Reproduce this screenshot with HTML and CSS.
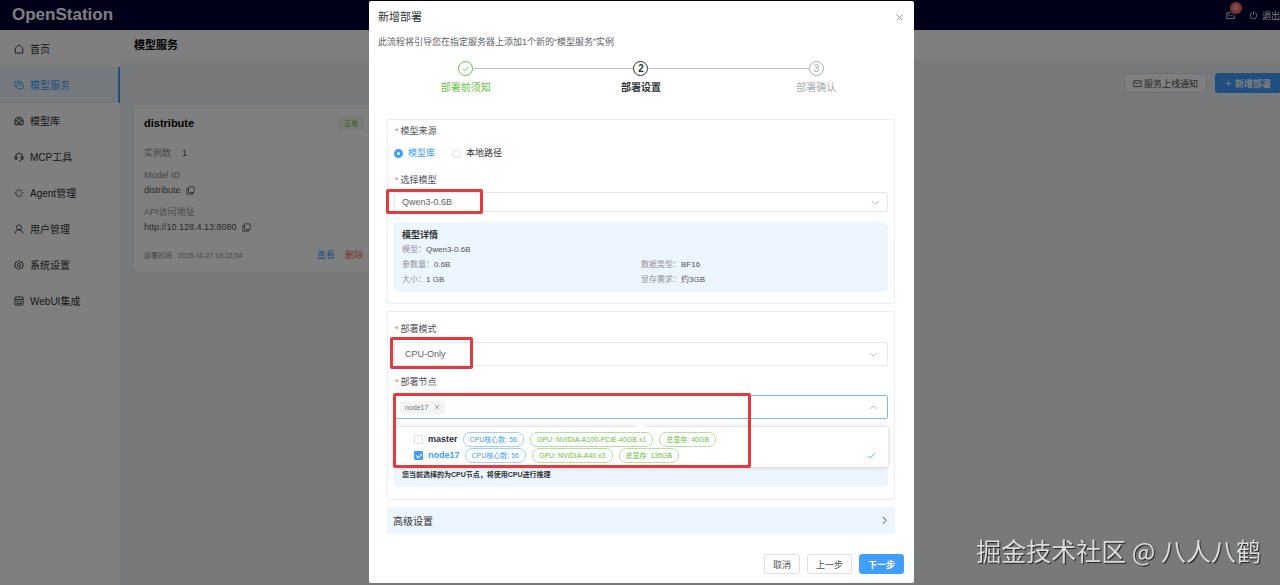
FILE: index.html
```html
<!DOCTYPE html>
<html lang="zh-CN">
  <head>
    <meta charset="UTF-8" />
    <meta name="viewport" content="width=device-width, initial-scale=1.0" />
    <title>OpenStation</title>
    <link rel="stylesheet" href="styles.css">
  </head>
  <body>
    <header class="topbar">
      <div class="brand">OpenStation</div>
      <div class="topbar-right">
        <button class="mail-btn" aria-label="消息">
          <svg class="icon" viewBox="0 0 16 16"><path d="M9.500 3H1.500v10.500h13V7M3.500 5.500L8 9l4-3" /></svg>
          <span class="badge">0</span>
        </button>
        <button class="logout-btn">
          <svg class="icon" viewBox="0 0 16 16"><path d="M5 2.800a6 6 0 1 0 6 0M8 1v6" /></svg>
          退出
        </button>
      </div>
    </header>

    <div class="layout">
      <nav class="sidebar">
        <a class="nav-item" href="#">
          <svg class="icon" viewBox="0 0 16 16"><path d="M2 6.500L8 1.500l6 5V14.500H2z" /></svg>首页
        </a>
        <a class="nav-item active" href="#">
          <svg class="icon" viewBox="0 0 16 16"><path d="M4.500 10.500H4a3 3 0 0 1-3-3V5a3 3 0 0 1 3-3h5a3 3 0 0 1 3 3M4.500 9V8a3 3 0 0 1 3-3H12a3 3 0 0 1 3 3v3a3 3 0 0 1-3 3H8a3.500 3.500 0 0 1-3.500-3.500M7.500 8.500h2a1.500 1.500 0 0 1 1.500 1.500" /></svg>模型服务
        </a>
        <a class="nav-item" href="#">
          <svg class="icon" viewBox="0 0 16 16"><path d="M1.500 7.500h4a2.500 2.500 0 0 0 5 0h4v6.500h-13zM1.500 7.500L3.500 3.500c2-2 7-2 9 0l2 4M5 5h6M4 11.500h8" /></svg>模型库
        </a>
        <a class="nav-item" href="#">
          <svg class="icon" viewBox="0 0 16 16"><path d="M4.500 12V7.500H1.500V11.500H4.500M11.500 12V7.500h3V11.500H11.500M2.500 7.500a5.500 5.500 0 0 1 11 0M12 12c0 2-1.500 2.500-3.500 2.500" /></svg>MCP工具
        </a>
        <a class="nav-item" href="#">
          <svg class="icon" viewBox="0 0 16 16"><path d="M8 1v3.500M8 11.500V15M1 8h3.500M11.500 8H15M3 3l2.500 2.500M10.500 10.500L13 13M3 13l2.500-2.500M10.500 5.500L13 3" /></svg>Agent管理
        </a>
        <a class="nav-item" href="#">
          <svg class="icon" viewBox="0 0 16 16"><circle cx="8" cy="5.500" r="4" /><path d="M2 15c0-3.500 2.500-5.500 6-5.500s6 2 6 5.500" /></svg>用户管理
        </a>
        <a class="nav-item" href="#">
          <svg class="icon" viewBox="0 0 16 16"><path d="M8 1l2 1.700 3.800.8.200 3L15 8l-1 1.500-.2 3-3.800.8L8 15l-2-1.700-3.800-.8-.2-3L1 8l1-1.500.2-3L6 2.700z" /><circle cx="8" cy="8" r="2.500" /></svg>系统设置
        </a>
        <a class="nav-item" href="#">
          <svg class="icon" viewBox="0 0 16 16"><rect x="1.500" y="1.500" width="13" height="13" rx="2" /><path d="M1.500 5.500h13M4 8.500h4M10.500 7.500v2h2M4 12h2M6.500 11v2M8.500 12H12" /></svg>WebUI集成
        </a>
      </nav>

      <main class="main">
        <h1 class="page-title">模型服务</h1>
        <div class="toolbar">
          <button class="btn">
            <svg class="icon" viewBox="0 0 16 16"><path d="M1.500 3h13v10.500h-13zM3.500 5.500L8 9l4.500-3.500" /></svg>服务上线通知
          </button>
          <button class="btn btn-primary btn-add">
            <svg class="icon" viewBox="0 0 16 16"><path d="M8 3v10M3 8h10" /></svg>新增部署
          </button>
        </div>

        <article class="card">
          <div class="card-head">
            <h2>distribute</h2>
            <span class="status">正常</span>
          </div>
          <p class="card-count"><span class="muted">实例数</span><span>1</span></p>
          <p class="muted">Model ID</p>
          <p class="card-value">distribute
            <svg class="icon" viewBox="0 0 16 16"><rect x="4.500" y="1.500" width="10" height="10" rx="1.500" /><path d="M4.500 4.500h-3v10h10v-3" /></svg>
          </p>
          <p class="muted">API访问地址</p>
          <p class="card-value">http://10.128.4.13:8080
            <svg class="icon" viewBox="0 0 16 16"><rect x="4.500" y="1.500" width="10" height="10" rx="1.500" /><path d="M4.500 4.500h-3v10h10v-3" /></svg>
          </p>
          <div class="card-foot">
            <span class="muted">部署时间</span>
            <time class="muted">2025-11-27 19:22:54</time>
            <a class="view" href="#">查看</a>
            <a class="remove" href="#">删除</a>
          </div>
        </article>
      </main>
    </div>

    <div class="overlay">
      <section class="dialog" role="dialog" aria-labelledby="dialogTitle">
        <div class="dialog-head">
          <h2 id="dialogTitle">新增部署</h2>
          <button class="close-btn" aria-label="关闭">
            <svg class="icon" viewBox="0 0 16 16"><path d="M3 3l10 10M13 3L3 13" /></svg>
          </button>
        </div>
        <p class="dialog-desc">此流程将引导您在指定服务器上添加1个新的“模型服务”实例</p>

        <ol class="steps">
          <li class="step done">
            <span class="step-mark"><svg class="icon" viewBox="0 0 16 16"><path d="M3 8.500l3.500 3.500L13 5" /></svg></span>
            <span class="step-title">部署前须知</span>
          </li>
          <li class="step current">
            <span class="step-mark">2</span>
            <span class="step-title">部署设置</span>
          </li>
          <li class="step">
            <span class="step-mark">3</span>
            <span class="step-title">部署确认</span>
          </li>
        </ol>

        <form class="form">
          <div class="panel">
            <div class="label required">模型来源</div>
            <div class="radios">
              <label class="on"><input type="radio" name="source" checked />模型库</label>
              <label><input type="radio" name="source" />本地路径</label>
            </div>
            <label class="label required" for="model">选择模型</label>
            <div class="field">
              <select id="model"><option>Qwen3-0.6B</option></select>
              <svg class="icon arrow" viewBox="0 0 16 16"><path d="M2 5l6 6 6-6" /></svg>
              <span class="mark mark-model"></span>
            </div>
            <div class="details">
              <h3>模型详情</h3>
              <dl>
                <div class="wide"><dt>模型：</dt><dd>Qwen3-0.6B</dd></div>
                <div><dt>参数量：</dt><dd>0.6B</dd></div>
                <div><dt>数据类型：</dt><dd>BF16</dd></div>
                <div><dt>大小：</dt><dd>1 GB</dd></div>
                <div><dt>显存需求：</dt><dd>约3GB</dd></div>
              </dl>
            </div>
          </div>

          <div class="panel panel-deploy">
            <label class="label required" for="mode">部署模式</label>
            <div class="field field-large">
              <select id="mode"><option>CPU-Only</option></select>
              <svg class="icon arrow" viewBox="0 0 16 16"><path d="M2 5l6 6 6-6" /></svg>
              <span class="mark mark-mode"></span>
            </div>
            <label class="label required" for="nodes">部署节点</label>
            <div class="field field-large">
              <div class="multi">
                <span class="tag">node17
                  <svg class="icon" viewBox="0 0 16 16"><path d="M2 2l12 12M14 2L2 14" /></svg>
                </span>
                <input type="text" id="nodes" />
              </div>
              <svg class="icon arrow" viewBox="0 0 16 16"><path d="M2 11l6-6 6 6" /></svg>
              <div class="dropdown">
                <label class="option">
                  <input type="checkbox" />
                  <span class="option-name">master</span>
                  <span class="pill">CPU核心数: 56</span>
                  <span class="pill green">GPU: NVIDIA-A100-PCIE-40GB x1</span>
                  <span class="pill green">总显存: 40GB</span>
                </label>
                <label class="option selected">
                  <input type="checkbox" checked />
                  <span class="option-name">node17</span>
                  <span class="pill">CPU核心数: 56</span>
                  <span class="pill green">GPU: NVIDIA-A40 x3</span>
                  <span class="pill green">总显存: 135GB</span>
                  <svg class="icon tick" viewBox="0 0 16 16"><path d="M2 8.500l4 4L14 4" /></svg>
                </label>
              </div>
              <span class="mark mark-nodes"></span>
            </div>
            <p class="notice">您当前选择的为CPU节点，将使用CPU进行推理</p>
          </div>

          <button type="button" class="advanced">高级设置
            <svg class="icon" viewBox="0 0 16 16"><path d="M5 2l6 6-6 6" /></svg>
          </button>
        </form>

        <div class="dialog-foot">
          <button class="btn">取消</button>
          <button class="btn">上一步</button>
          <button class="btn btn-primary">下一步</button>
        </div>
      </section>
    </div>

    <div class="watermark">掘金技术社区 @ 八人八鹤</div>
  </body>
</html>
```
FILE: styles.css
```css
* {
  box-sizing: border-box;
}
body {
  margin: 0;
  min-height: 100vh;
  display: flex;
  flex-direction: column;
  overflow: hidden;
  font-family: "Liberation Sans", "Noto Sans CJK SC", sans-serif;
  font-size: 9px;
  line-height: 13px;
  color: #303133;
  background: #f0f2f5;
}
h1, h2, h3, p, ol, dl, dd {
  margin: 0;
  padding: 0;
}
a {
  text-decoration: none;
}
button, input, select {
  font-family: inherit;
  font-size: 9px;
  color: inherit;
}
button {
  padding: 0;
  border: 0;
  background: none;
  cursor: pointer;
}
.icon {
  width: 9px;
  height: 9px;
  flex: none;
  fill: none;
  stroke: currentColor;
  stroke-width: 1.5;
}

/* page */
.topbar {
  height: 30px;
  padding-left: 12px;
  display: flex;
  align-items: center;
  justify-content: space-between;
  background: #000030;
  color: #fff;
}
.brand {
  font-size: 17px;
  line-height: 20px;
  font-weight: bold;
}
.topbar-right {
  display: flex;
  align-items: center;
  gap: 14px;
}
.mail-btn {
  position: relative;
  display: flex;
}
.badge {
  position: absolute;
  left: 4px;
  top: -9px;
  width: 12px;
  height: 12px;
  border-radius: 6px;
  background: #f56c6c;
  font-size: 8px;
  line-height: 12px;
}
.logout-btn {
  display: flex;
  align-items: center;
  gap: 4px;
}
.layout {
  flex: 1;
  display: flex;
}
.sidebar {
  width: 120px;
  padding-top: 1px;
  background: #fff;
}
.nav-item {
  height: 36px;
  padding-left: 14px;
  display: flex;
  align-items: center;
  gap: 6px;
  font-size: 10px;
  color: #303133;
}
.nav-item .icon {
  width: 10px;
  height: 10px;
}
.nav-item.active {
  color: #409eff;
  background: #ecf5ff;
  border-right: 2px solid #409eff;
}
.main {
  flex: 1;
}
.page-title {
  padding: 7px 14px;
  font-size: 11px;
  line-height: 16px;
  color: #000;
  background: #fff;
}
.toolbar {
  padding: 13px 0 12px;
  display: flex;
  justify-content: flex-end;
  gap: 8px;
}
.btn {
  height: 20px;
  padding: 0 8px;
  display: flex;
  align-items: center;
  gap: 2px;
  border: 1px solid #dcdfe6;
  border-radius: 3px;
  background: #fff;
  color: #505257;
}
.btn-primary {
  border-color: #409eff;
  background: #409eff;
  color: #fff;
  font-weight: bold;
}
.btn-add {
  border-radius: 3px 0 0 3px;
}
.card {
  width: 240px;
  margin-left: 14px;
  padding: 10px;
  border-radius: 4px;
  background: #fff;
  color: #505257;
}
.card-head {
  display: flex;
  justify-content: space-between;
  align-items: center;
}
.card h2 {
  font-size: 11px;
  line-height: 16px;
  color: #000;
}
.status {
  padding: 0 6px;
  border-radius: 3px;
  background: #f0f9eb;
  font-size: 7px;
  color: #67c23a;
}
.card-count {
  display: flex;
  gap: 11px;
  margin: 16px 0 9px;
}
.card-value {
  display: flex;
  align-items: center;
  gap: 5px;
  margin: 2px 0 9px;
}
.muted {
  color: #909399;
}
.card-foot {
  display: flex;
  gap: 6px;
  margin-top: 15px;
  font-size: 7px;
}
.card-foot a {
  font-size: 9px;
}
.card-foot .view {
  margin-left: auto;
  color: #409eff;
}
.card-foot .remove {
  margin: 0 1px 0 4px;
  color: #f56c6c;
}

/* dialog */
.overlay {
  position: fixed;
  inset: 0;
  padding: 1px 0 0 3px;
  display: flex;
  justify-content: center;
  align-items: flex-start;
  background: rgba(0, 0, 0, 0.5);
}
.dialog {
  width: 545px;
  max-width: 100%;
  padding: 8px 10px 9px 9px;
  border-radius: 2px;
  background: #fff;
}
.dialog-head {
  display: flex;
  justify-content: space-between;
  align-items: center;
}
.dialog-head h2 {
  font-size: 11px;
  line-height: 16px;
  font-weight: normal;
}
.close-btn {
  display: flex;
  color: #909399;
}
.dialog-desc {
  margin-top: 10px;
  line-height: 14px;
  color: #606266;
}
.steps {
  margin-top: 12px;
  display: flex;
  list-style: none;
}
.step {
  flex: 1;
  display: grid;
  grid-template-columns: 1fr 15px 1fr;
  align-items: center;
  color: #a8abb2;
  text-align: center;
  font-size: 10px;
}
.step::before,
.step::after {
  content: "";
  grid-row: 1;
  height: 1px;
  background: #c0c4cc;
}
.step::before {
  grid-column: 1;
}
.step::after {
  grid-column: 3;
}
.step:first-child::before,
.step:last-child::after {
  visibility: hidden;
}
.step-mark {
  grid-row: 1;
  grid-column: 2;
  display: flex;
  align-items: center;
  justify-content: center;
  height: 15px;
  border: 1px solid currentColor;
  border-radius: 50%;
}
.step-title {
  grid-row: 2;
  grid-column: 1 / 4;
  margin-top: 5px;
  line-height: 14px;
}
.step.done {
  color: #67c23a;
}
.step.current {
  color: #303133;
  font-weight: bold;
}
.form {
  margin: 24px 9px 0;
}
.panel {
  padding: 5px 6px 11px;
  border: 1px solid #ebeef5;
  border-radius: 2px;
}
.panel-deploy {
  margin-top: 7px;
  padding: 11px 6px 12px;
}
.label {
  display: block;
  color: #505257;
}
.required::before {
  content: "*";
  margin: 0 2px 0 1px;
  color: #f56c6c;
}
.radios {
  display: flex;
  gap: 17px;
  margin: 9px 0 14px;
}
.radios label {
  display: flex;
  align-items: center;
  gap: 5px;
}
.radios .on {
  color: #409eff;
}
.radios input {
  appearance: none;
  width: 9px;
  height: 9px;
  margin: 0;
  border: 1px solid #dcdfe6;
  border-radius: 50%;
}
.radios input:checked {
  border: 3px solid #409eff;
}
.field {
  position: relative;
  height: 20px;
  margin-top: 5px;
}
.field-large {
  height: 24px;
  margin: 6px 0 10px;
}
.field select {
  appearance: none;
  width: 100%;
  height: 100%;
  padding: 0 7px;
  border: 1px solid #e4e7ed;
  border-radius: 2px;
  background: #fff;
  color: #606266;
}
.field-large select {
  padding: 0 10px;
}
.arrow {
  position: absolute;
  right: 8px;
  top: calc(50% - 4px);
  color: #a8abb2;
}
.field-large .arrow {
  right: 10px;
}
.details {
  margin-top: 10px;
  padding: 6px 8px 5px;
  border-radius: 5px;
  background: #edf5fe;
}
.details h3 {
  font-size: 9px;
  line-height: 14px;
}
.details dl {
  display: grid;
  grid-template-columns: 1fr 1fr;
  font-size: 8px;
  line-height: 15px;
}
.details dl div {
  display: flex;
}
.details .wide {
  grid-column: 1 / 3;
}
.details dt {
  color: #909399;
}
.details dd {
  color: #505257;
}
.multi {
  height: 100%;
  padding: 0 5px;
  display: flex;
  align-items: center;
  border: 1px solid #79bbff;
  border-radius: 2px;
}
.multi input {
  flex: 1;
  min-width: 0;
  border: 0;
  outline: 0;
  background: none;
}
.tag {
  display: flex;
  align-items: center;
  gap: 6px;
  padding: 0 5px;
  border-radius: 2px;
  background: #f4f4f5;
  font-size: 7px;
  color: #73767a;
}
.tag .icon {
  width: 6px;
  height: 6px;
}
.dropdown {
  position: absolute;
  left: 0;
  right: 0;
  top: 32px;
  z-index: 1;
  padding: 4px 12px 4px 20px;
  border-radius: 2px;
  background: #fff;
  box-shadow: 0 0 5px rgba(0, 0, 0, 0.2);
}
.dropdown::before {
  content: "";
  position: absolute;
  left: calc(50% - 4px);
  top: -3px;
  width: 7px;
  height: 7px;
  background: #fff;
  transform: rotate(45deg);
}
.option {
  height: 16px;
  display: flex;
  align-items: center;
  gap: 5px;
}
.option input {
  appearance: none;
  width: 9px;
  height: 9px;
  margin: 0;
  border: 1px solid #dcdfe6;
  border-radius: 1px;
}
.option input:checked {
  border-color: #409eff;
  background: #409eff;
  display: grid;
}
.option input:checked::before {
  content: "";
  width: 3px;
  height: 5px;
  margin-left: 2px;
  border: solid #fff;
  border-width: 0 1px 1px 0;
  transform: rotate(45deg);
}
.option-name {
  font-weight: bold;
}
.option.selected .option-name,
.tick {
  color: #409eff;
}
.tick {
  margin-left: auto;
}
.pill {
  padding: 0 6px;
  border: 1px solid #a0cfff;
  border-radius: 7px;
  font-size: 7px;
  color: #409eff;
}
.pill.green {
  margin-left: 1px;
  border-color: #b3e19d;
  color: #67c23a;
}
.notice {
  margin-top: 44px;
  padding: 0 8px;
  border-radius: 5px;
  background: #edf5fe;
  font-size: 7px;
  line-height: 24px;
  font-weight: bold;
}
.advanced {
  width: 100%;
  height: 27px;
  margin-top: 7px;
  padding: 0 6px;
  display: flex;
  align-items: center;
  justify-content: space-between;
  background: #edf5fe;
  font-size: 10px;
}
.dialog-foot {
  margin-top: 20px;
  display: flex;
  justify-content: flex-end;
  gap: 7px;
}

/* red frames round the values to pick */
.mark {
  position: absolute;
  z-index: 2;
  border: 3px solid #e6393b;
  border-radius: 2px;
  pointer-events: none;
}
.mark-model {
  left: -8px;
  top: -3px;
  width: 97px;
  height: 25px;
}
.mark-mode {
  left: -4px;
  top: -5px;
  width: 83px;
  height: 32px;
}
.mark-nodes {
  left: -1px;
  top: -2px;
  width: 358px;
  height: 75px;
}
.watermark {
  position: fixed;
  right: 19px;
  bottom: 17px;
  font-family: "Noto Sans CJK SC", sans-serif;
  font-size: 25px;
  line-height: 36px;
  color: #dcdcdc;
  text-shadow: 1px 1px 1px #222;
}
```
